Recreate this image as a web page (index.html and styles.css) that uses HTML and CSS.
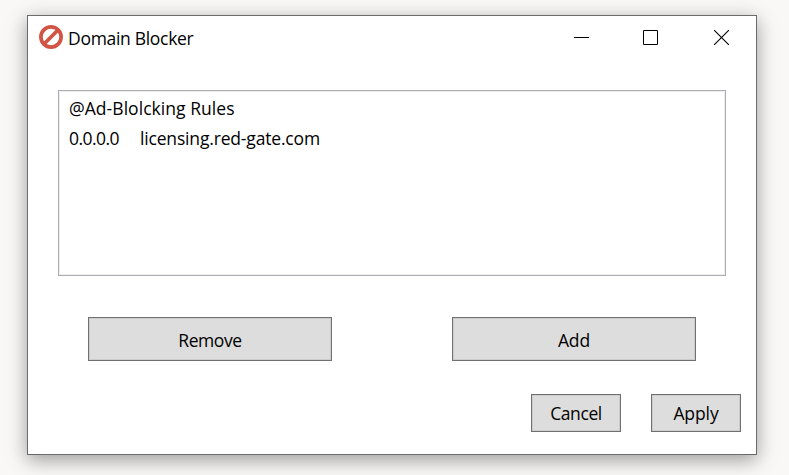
FILE: index.html
```html
<!DOCTYPE html>
<html lang="en">
<head>
<meta charset="utf-8">
<title>Domain Blocker</title>
<link rel="stylesheet" href="styles.css">
</head>
<body>
<main class="window">
  <header class="titlebar">
    <svg class="logo" width="24" height="24" viewBox="0 0 24 24" fill="none" stroke="#d25444" stroke-width="3.7"><circle cx="12" cy="12" r="10.1"/><path d="M5 19 19 5"/></svg>
    <h1 class="title">Domain Blocker</h1>
    <div class="controls">
      <svg width="15" height="15" viewBox="0 0 15 15" shape-rendering="crispEdges"><path d="M0 7h15v1H0z"/></svg>
      <svg width="15" height="15" viewBox="0 0 15 15" fill="none" stroke="#000"><path d="M.5.5h14v14H.5z"/></svg>
      <svg width="15" height="15" viewBox="0 0 15 15" fill="none" stroke="#000" stroke-width="1.1"><path d="m0 0 15 15M15 0 0 15"/></svg>
    </div>
  </header>
  <section class="rules">
    <div class="row"><span class="heading">@Ad-Blolcking Rules</span></div>
    <div class="row"><span class="ip">0.0.0.0</span><span class="host">licensing.red-gate.com</span></div>
  </section>
  <div class="edit-actions">
    <button class="button remove"><span>Remove</span></button>
    <button class="button add"><span>Add</span></button>
  </div>
  <footer class="dialog-actions">
    <button class="button cancel"><span>Cancel</span></button>
    <button class="button apply"><span>Apply</span></button>
  </footer>
</main>
</body>
</html>
```
FILE: styles.css
```css
* { box-sizing: border-box; }
body {
  margin: 0;
  height: 475px;
  padding: 15px 32px 20px 27px;
  overflow: hidden;
  background: #f9f8f6;
  color: #000;
  font: 400 17.5px/30px "Open Sans", "Noto Sans", sans-serif;
}
.window {
  width: 730px;
  height: 440px;
  border: 1px solid #6b6b6b;
  background: #fff;
  box-shadow: 0 5px 18px rgba(0, 0, 0, .38);
}
.titlebar {
  display: flex;
  align-items: center;
  height: 43px;
  padding: 0 27px 0 11px;
}
.logo { flex: none; margin-top: -1px; }
.title { margin: 1px 0 0 5px; font: inherit; letter-spacing: -.3px; }
.controls { display: flex; gap: 54px; margin-left: auto; }
.controls svg { display: block; }
.controls svg:last-child { margin-left: 2px; }
.rules {
  height: 186px;
  margin: 31px 30px 0;
  padding: 2px 10px;
  border: 1px solid #abadb3;
  box-shadow: inset 0 0 0 1px #eeeef0;
}
.row { display: flex; height: 30px; white-space: nowrap; }
.heading { letter-spacing: .05px; }
.host { letter-spacing: -.17px; }
.ip { width: 71px; letter-spacing: -.55px; }
.edit-actions {
  display: flex;
  justify-content: space-between;
  margin: 41px 60px 0;
}
.button {
  height: 44px;
  width: 244px;
  padding: 2px 0 0;
  border: 1px solid #707070;
  box-shadow: inset 0 0 0 1px #cdcdcd;
  background: #ddd;
  color: #000;
  font: inherit;
  letter-spacing: -.4px;
}
.dialog-actions {
  display: flex;
  justify-content: flex-end;
  gap: 30px;
  margin: 33px 15px 0;
}
.dialog-actions .button { width: 90px; height: 38px; padding: 0; }
.add, .apply { letter-spacing: -.1px; }
```
